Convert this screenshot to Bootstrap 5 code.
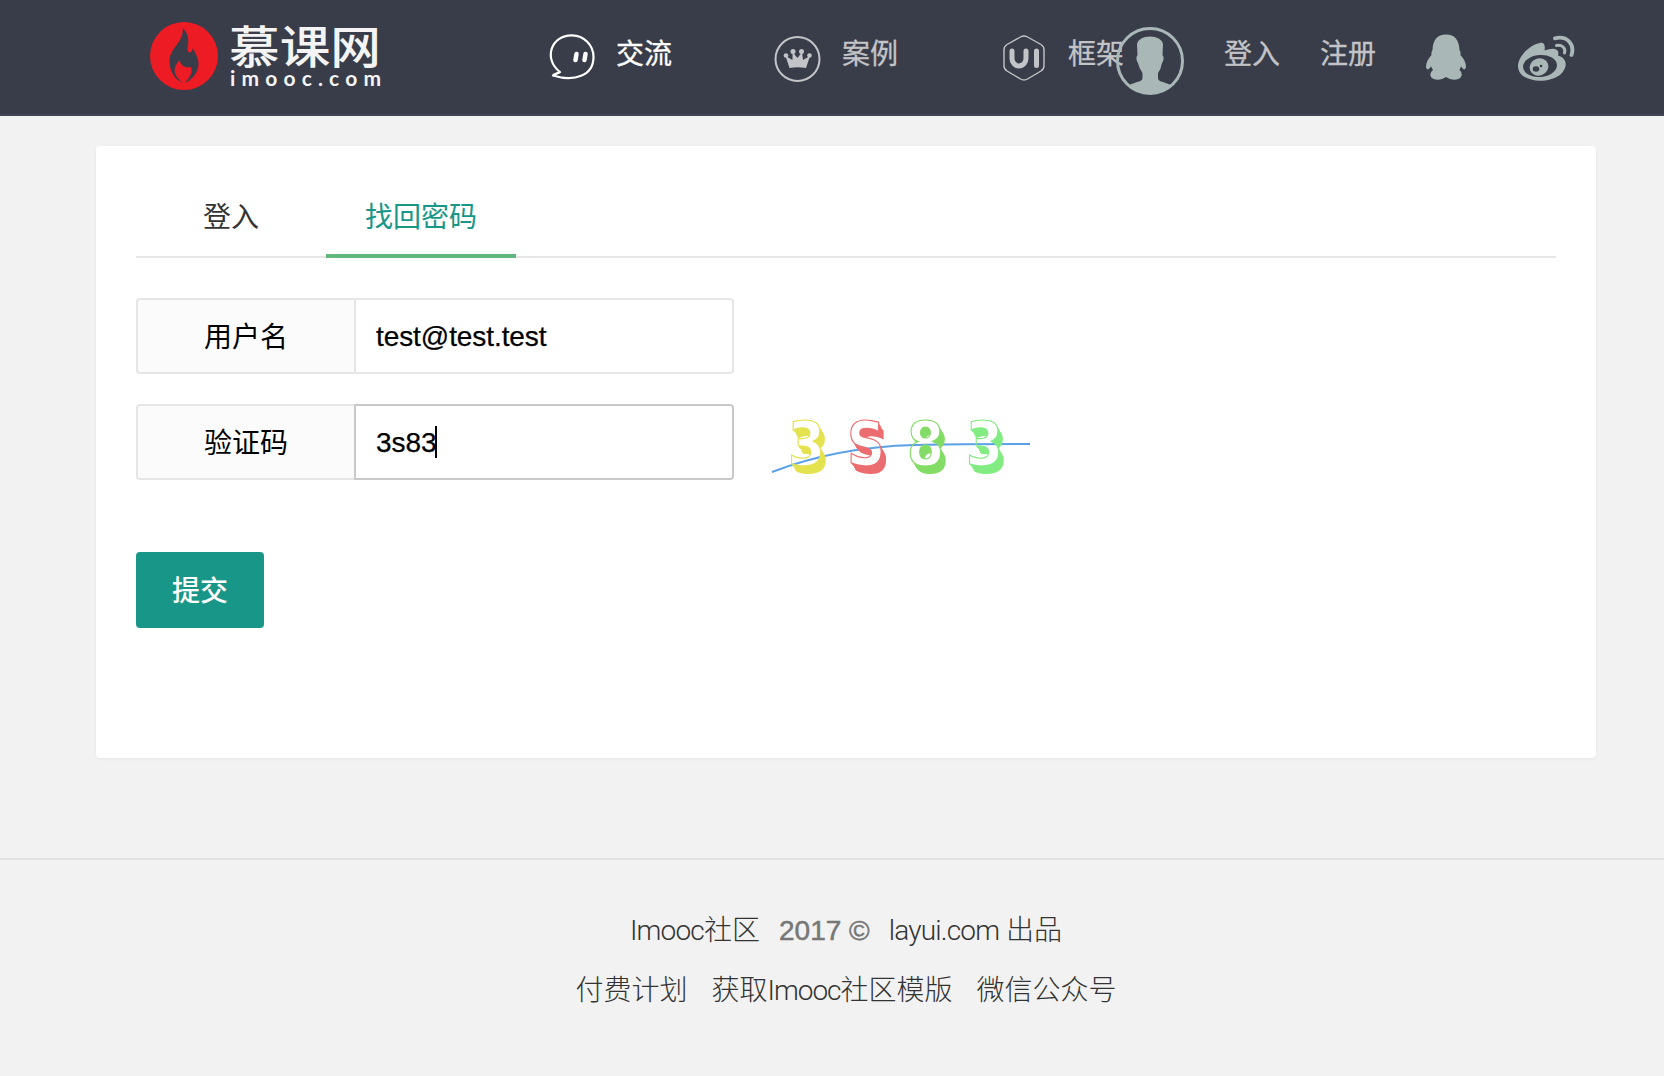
<!DOCTYPE html>
<html lang="zh-CN">
<head>
<meta charset="utf-8">
<meta name="viewport" content="width=device-width, initial-scale=1">
<title>找回密码</title>
<link href="https://cdn.jsdelivr.net/npm/bootstrap@5.3.0/dist/css/bootstrap.min.css" rel="stylesheet">
<style>
body{background:#f2f2f2;font-family:"Liberation Sans","Noto Sans CJK SC",sans-serif;font-size:28px;line-height:1.4;color:#000;overflow:hidden}
.site-head{height:116px;background:#393d49;border-bottom:2px solid #404553;padding:0 0 6px 150px}
.site-head a{color:#c3c4c8;text-decoration:none;font-weight:400;-webkit-text-stroke:.3px;line-height:40px;padding-bottom:4px;white-space:nowrap;font-family:"Noto Sans CJK SC",sans-serif}
.site-head a.current{color:#fff}
.site-head svg{flex:none;display:block}
.i-logo{margin:4px 0 0}
.i-chat{margin:5px 21px 0 168px}
.i-crown{margin:10px 21px 0 102px}
.i-hex{margin:7px 23px 0 105px}
.i-face{margin:14px 40px 0 -8px}
.reg{margin-left:40px}
.i-qq{margin:6px 0 0 49px}
.i-weibo{margin:8px 0 0 50px}
.panel-box{width:1500px;height:612px;margin:30px 0 0 96px;padding:30px 40px;background:#fff;border-radius:4px;box-shadow:0 1px 3px rgba(0,0,0,.06)}
.tab-bar{height:82px;border-bottom:2px solid #e6e6e6}
.tab-bar .nav-link{width:190px;height:82px;padding:0;line-height:83px;text-align:center;color:#333;border-radius:0;border-bottom:4px solid transparent}
.tab-bar .nav-link.active{color:#189688;border-color:#62b57b}
.row-user{margin-top:40px}
.row-code{margin-top:30px}
.field{width:598px;height:76px}
.field .input-group-text{width:220px;padding:3px 0 0;justify-content:center;font-size:28px;color:#000;background:#fbfbfb;border:2px solid #e6e6e6;border-radius:4px 0 0 4px}
.field .form-control{font-size:28px;margin-left:-2px!important;letter-spacing:-.08px;color:#000;padding:2px 20px 0;border:2px solid #e6e6e6;border-radius:0 4px 4px 0;box-shadow:none;display:flex;align-items:center;-webkit-text-stroke:.25px #000}
.field .form-control.focused{border-color:#c9c9c9}
.caret{width:2px;height:32px;margin:-3px 0 0 -1px;background:#000}
.captcha-art{margin-left:32px}
.send{width:128px;height:76px;margin-top:72px;padding:3px 0 0;font-size:28px;font-weight:500;color:#fff;background:#189688;border:0;border-radius:4px}
.site-foot{margin-top:100px;border-top:2px solid #e2e2e2;padding:41px 0 0 28px;line-height:60px;height:218px}
.site-foot a{color:#333;text-decoration:none;font-family:Roboto,"Noto Sans CJK SC",sans-serif;font-weight:300;white-space:nowrap}
.site-foot i{font-style:normal;letter-spacing:-1px}
.foot-top i{letter-spacing:-.8px}
.site-foot span{color:#777;-webkit-text-stroke:.5px #777;margin:0 19px}
.foot-links{gap:24px}
</style>
</head>
<body>
<header class="site-head d-flex align-items-center">
  <svg class="i-logo" width="231" height="96" viewBox="150 8 231 96">
    <circle cx="184" cy="56" r="34" fill="#ed1c24"/>
    <path fill="#393d49" d="M182.700 28C190 35 188.500 43 187.500 48C187 53 191 55 193 48C195 53 198.500 57 198.500 64C198.500 72 192 80 184.500 83C190 78 193 72 191 67C186 68.500 180 65 179.500 60C175 65 172.500 71 177 77C179 79.500 181 81.500 183 83C175 80 169.500 71 169.500 62C169.500 47 184 43 182.700 28z"/>
    <text x="229" y="64" font-size="45" font-weight="500" fill="#f4f4f5" textLength="152" lengthAdjust="spacingAndGlyphs" font-family="Noto Sans CJK SC">慕课网</text>
    <text x="230" y="86" font-size="21" font-weight="700" fill="#f4f4f5" textLength="151" font-family="Lato">imooc.com</text>
  </svg>
  <svg class="i-chat" width="46" height="46" viewBox="0 0 46 46" fill="none" stroke="#fff" stroke-width="2.2" stroke-linejoin="round"><path d="M11 38C-6 25 2 1 23 1.300C35 1.500 44.500 11 44.500 23C44.500 42 25 48 4 41.500C4.500 40 8 40 11 38z"/><path d="M27.500 20l-1 6M36.500 20l-1 6" stroke-width="4.500" stroke-linecap="round"/></svg>
  <a href="#" class="current">交流</a>
  <svg class="i-crown" width="47" height="46" viewBox="0 0 47 46" fill="#c3c4c8"><circle cx="23.500" cy="23" r="22" fill="none" stroke="#c3c4c8" stroke-width="2"/><path d="M15.500 32L11.500 20L18.500 24L18.500 16L23.500 22L28 16L29 24L36 20L32 32Q23.500 30.500 15.500 32z"/><path d="M16 24h15.500l-1 6h-13z"/><circle cx="12" cy="19.500" r="2.300"/><circle cx="19" cy="15.500" r="2.500"/><circle cx="27.500" cy="15.500" r="2.500"/><circle cx="35.500" cy="19.500" r="2.300"/></svg>
  <a href="#">案例</a>
  <svg class="i-hex" width="42" height="46" viewBox="0 0 42 46" fill="none" stroke="#c3c4c8"><path stroke-width="1.400" stroke-linejoin="round" d="M17.500 2Q21 .1 24.500 2L38 9.500Q41 11.500 41 14.500V31Q41 34 38 36L24.500 44Q21 46 17.500 44L4 36Q1 34 1 31V14.500Q1 11.500 4 9.500z"/><path stroke-width="5" stroke-linecap="round" d="M9 16v7.500a7 7.500 0 0 0 14 0V16M33.500 16v14.500"/></svg>
  <a href="#">框架</a>
  <svg class="i-face" width="68" height="68" viewBox="0 0 68 68"><circle cx="34" cy="34" r="32.500" fill="none" stroke="#a9b7b7" stroke-width="3"/><path fill="#a9b7b7" d="M21 17Q23 9.500 34 9.500T47 17L46.500 28Q49 31 46 36Q45 42 42 46V51Q42 54 47 55L55 58Q46 67 34 67T13 58L21 55Q26.500 54 26.500 51V46Q23 41 22 36Q19 31 21.500 28z"/></svg>
  <a href="#">登入</a>
  <a href="#" class="reg">注册</a>
  <svg class="i-qq" width="42" height="46" viewBox="0 0 42 46" fill="#a9b7b7"><path d="M21 .5C30 .5 34 6 34.500 16Q36 18 35.500 21Q41 27 41 33Q40 38 36 32.500L34.500 36Q38 39 36 43C33 47 25 46 21 43C17 46 9 47 6 43Q4 39 8 36L6 32.500Q2 38 1 33Q1 27 6.500 21Q6 18 7.500 16C8 6 12 .5 21 .5z"/></svg>
  <svg class="i-weibo" width="58" height="47" viewBox="0 0 58 47"><path fill="#a9b7b7" d="M23 8C27 7 28.500 10 27.500 15.500Q34 13 38 14C41 15 42 17 41 20.500C52 24 50 34 43 40C29 50 1 47 1 31C1 22 12 10 23 8z"/><ellipse cx="23" cy="31" rx="17" ry="11" fill="#393d49" transform="rotate(-5 23 31)"/><ellipse cx="22" cy="32" rx="9.500" ry="8.500" fill="#a9b7b7" transform="rotate(-20 22 32)"/><ellipse cx="19" cy="34" rx="3.300" ry="2.700" fill="#393d49"/><circle cx="24" cy="31" r="1.300" fill="#393d49"/><path fill="none" stroke="#a9b7b7" stroke-width="3.800" stroke-linecap="round" d="M38 3.300C50 .5 58 9 54.500 20"/><path fill="none" stroke="#a9b7b7" stroke-width="3" stroke-linecap="round" d="M39.500 10.500C45 9.500 49 13 47.500 18"/></svg>
</header>

<main class="panel-box">
  <nav class="nav tab-bar">
    <a class="nav-link" href="#">登入</a>
    <a class="nav-link active" href="#">找回密码</a>
  </nav>
  <form>
    <div class="input-group field row-user">
      <label class="input-group-text">用户名</label>
      <div class="form-control">test@test.test</div>
    </div>
    <div class="d-flex align-items-center row-code">
      <div class="input-group field">
        <label class="input-group-text">验证码</label>
        <div class="form-control focused">3s83<i class="caret"></i></div>
      </div>
      <svg width="270" height="76" viewBox="766 404 270 76" class="captcha-art" font-family="DejaVu Sans" font-weight="700">
        <defs>
          <g id="d1"><text x="788" y="465" font-size="60" textLength="37" lengthAdjust="spacingAndGlyphs">3</text></g>
          <g id="d2"><text x="847" y="465" font-size="60" textLength="38" lengthAdjust="spacingAndGlyphs">S</text></g>
          <g id="d3"><text x="907" y="465" font-size="60" textLength="37" lengthAdjust="spacingAndGlyphs">8</text></g>
          <g id="d4"><text x="966" y="465" font-size="60" textLength="37" lengthAdjust="spacingAndGlyphs">3</text></g>
          <mask id="face" maskUnits="userSpaceOnUse" x="766" y="404" width="270" height="76"><rect x="766" y="404" width="270" height="76" fill="#fff"/><use href="#d1"/><use href="#d2"/><use href="#d3"/><use href="#d4"/></mask>
          <g id="deep"><use href="#d1" fill="#e4e24e"/><use href="#d2" fill="#ec6d70"/><use href="#d3" fill="#83dc65"/><use href="#d4" fill="#82ec82"/></g>
        </defs>
        <path d="M772 472Q837 447 915 445Q970 444 1030 444" fill="none" stroke="#5ba1e8" stroke-width="2"/>
        <g mask="url(#face)"><use href="#deep" x="1" y="1.500"/><use href="#deep" x="2" y="3"/><use href="#deep" x="3" y="5"/><use href="#deep" x="4" y="6.500"/><use href="#deep" x="5" y="8"/></g>
        <g fill="none" stroke-width="1.200"><use href="#d1" stroke="#e4e24e"/><use href="#d2" stroke="#ec6d70"/><use href="#d3" stroke="#83dc65"/><use href="#d4" stroke="#82ec82"/></g>
      </svg>
    </div>
    <button type="button" class="btn send">提交</button>
  </form>
</main>

<footer class="site-foot">
  <div class="d-flex justify-content-center foot-top"><a href="#"><i>Imooc</i>社区</a><span>2017 ©</span><a href="#"><i>layui.com</i> 出品</a></div>
  <div class="d-flex justify-content-center foot-links"><a href="#">付费计划</a><a href="#">获取<i>Imooc</i>社区模版</a><a href="#">微信公众号</a></div>
</footer>
<script src="https://cdn.jsdelivr.net/npm/bootstrap@5.3.0/dist/js/bootstrap.bundle.min.js"></script>
</body>
</html>
